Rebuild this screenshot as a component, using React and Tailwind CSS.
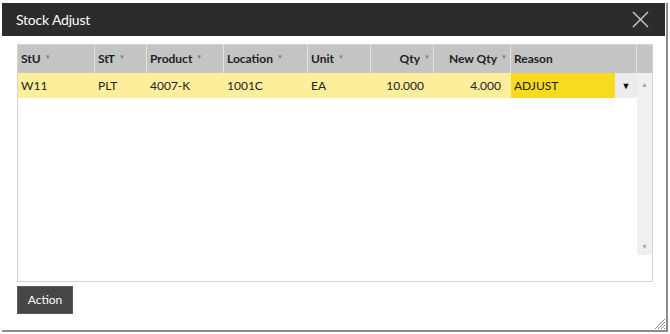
import React from 'react';

const cols = [
  { key: 'stu', label: 'StU', w: 'w-[77px]' },
  { key: 'stt', label: 'StT', w: 'w-[52px]' },
  { key: 'product', label: 'Product', w: 'w-[77px]' },
  { key: 'location', label: 'Location', w: 'w-[84px]' },
  { key: 'unit', label: 'Unit', w: 'w-[63px]' },
  { key: 'qty', label: 'Qty', w: 'w-[63px]', right: true },
  { key: 'newQty', label: 'New Qty', w: 'w-[77px]', right: true },
];

const row = { stu: 'W11', stt: 'PLT', product: '4007-K', location: '1001C', unit: 'EA', qty: '10.000', newQty: '4.000', reason: 'ADJUST' };

const SortMark = () => <span className="ml-[4px] text-[6px] text-[#808080] font-normal relative -top-[3px]">▼</span>;

export default function App() {
  return (
    <div className="w-[670px] h-[334px] bg-white pt-[3px] pl-[2px] font-['Lato','Liberation_Sans',sans-serif] text-[12px] text-[#222]">
      <div className="w-[666px] h-[329px] border-r-2 border-b-2 border-[#8c8c8c] flex flex-col relative">
        {/* title bar */}
        <div className="h-[33px] bg-[#2c2c2c] flex items-center justify-between pl-[14px] pr-[16px] mr-[1px]">
          <span className="text-white text-[14px] tracking-[-0.2px]">Stock Adjust</span>
          <svg width="17" height="17" viewBox="0 0 17 17">
            <path d="M1 1 L16 16 M16 1 L1 16" stroke="#cfcfcf" strokeWidth="1.4" />
          </svg>
        </div>

        {/* grid */}
        <div className="mt-[8px] ml-[15px] w-[636px] h-[238px] border border-[#d4d4d4] flex flex-col">
          <div className="flex h-[28px] bg-[#c4c4c4] font-bold text-[#1e1e1e]">
            {cols.map((c) => (
              <div key={c.key} className={`${c.w} border-r border-[#e4e4e4] flex items-center px-[3px] ${c.right ? 'justify-end' : ''}`}>
                {c.label}
                <SortMark />
              </div>
            ))}
            <div className="w-[126px] border-r border-[#e4e4e4] flex items-center px-[3px]">Reason</div>
            <div className="flex-1" />
          </div>
          <div className="flex flex-1">
            <div className="flex-1">
              <div className="flex h-[25px] bg-[#fdee9c]">
                {cols.map((c) => (
                  <div key={c.key} className={`${c.w} flex items-center px-[3px] ${c.right ? 'justify-end pr-[10px]' : ''}`}>
                    {row[c.key]}
                  </div>
                ))}
                <div className="w-[104px] bg-[#f8da1f] flex items-center px-[3px]">{row.reason}</div>
                <div className="w-[22px] bg-[#ececec] flex items-center justify-center text-[9px] text-black">▼</div>
              </div>
            </div>
            <div className="w-[15px] h-[182px] bg-[#f0f0f0] flex flex-col items-center justify-between pt-[6px] pb-[4px] text-[7px] text-[#a8a8a8]">
              <span>▲</span>
              <span>▼</span>
            </div>
          </div>
        </div>

        {/* actions */}
        <div className="mt-[4px] ml-[15px]">
          <button className="w-[56px] h-[28px] bg-[#464646] border border-[#5a5a5a] text-white text-[12px]">Action</button>
        </div>

        {/* resize grip */}
        <svg className="absolute right-[1px] bottom-[1px]" width="11" height="11" viewBox="0 0 11 11">
          <path d="M11 1 L1 11 M11 4 L4 11 M11 7 L7 11 M11 10 L10 11" stroke="#8a8a8a" strokeWidth="1" />
        </svg>
      </div>
    </div>
  );
}
